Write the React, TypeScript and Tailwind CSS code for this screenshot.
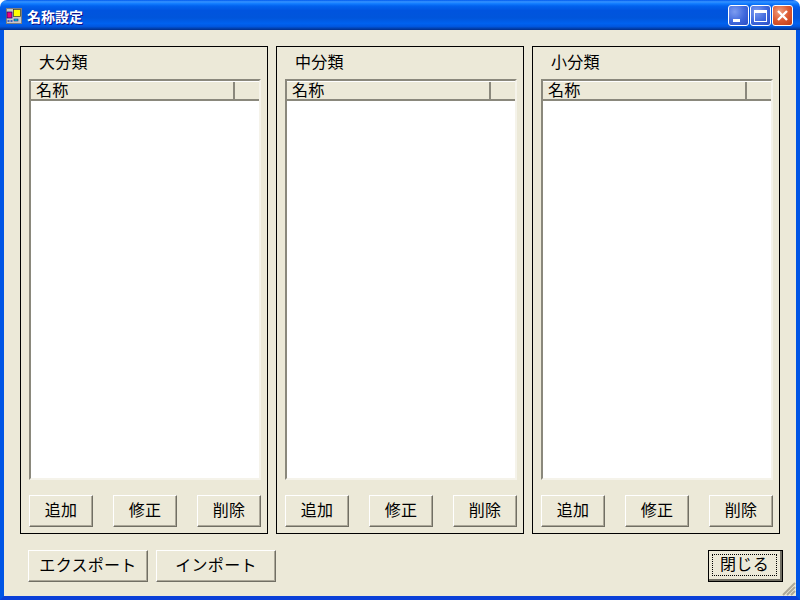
import { ReactElement, ReactNode } from 'react';

const jp = 'font-["Noto_Sans_CJK_JP","Liberation_Sans",sans-serif]';

function WinButton({ label, primary }: { label: string; primary?: boolean }): ReactElement {
  return (
    <button
      className={
        primary
          ? 'w-[75px] h-[32px] border border-black bg-[#ece9d8] p-0 text-[16px] tracking-[0.3px] text-black'
          : 'w-full h-[32px] border border-t-white border-l-white border-r-[#716f64] border-b-[#716f64] shadow-[inset_-1px_-1px_0_#aca899] bg-[#ece9d8] pb-[5px] text-[16px] tracking-[0.3px] text-black'
      }
    >
      {primary ? (
        <span className="flex h-full items-center justify-center border-r-2 border-b-2 border-r-[#716f64] border-b-[#716f64] p-[3px]">
          <span className="flex h-full w-full items-center justify-center border border-dotted border-black pb-[5px]">{label}</span>
        </span>
      ) : (
        label
      )}
    </button>
  );
}

function CaptionButton({ red, children }: { red?: boolean; children: ReactNode }): ReactElement {
  return (
    <div
      className={
        red
          ? 'flex h-[21px] w-[21px] items-center justify-center rounded-[3px] border border-white bg-[radial-gradient(circle_at_35%_30%,#f0a080,#dc5a32_50%,#c03a14)]'
          : 'flex h-[21px] w-[21px] items-center justify-center rounded-[3px] border border-white bg-[radial-gradient(circle_at_30%_30%,#7d9cf0,#3f68dc_55%,#2a4cc4)]'
      }
    >
      {children}
    </div>
  );
}

function Group({ title }: { title: string }): ReactElement {
  return (
    <section className="flex h-[488px] w-[248px] flex-col border border-black pl-[8px] pr-[6px]">
      <h2 className="ml-[10px] mt-[2px] mb-[2px] h-[24px] text-[16px] leading-[24px] tracking-[0.3px] text-black">{title}</h2>
      <div className="mt-[4px] h-[401px] w-[232px] border-2 border-t-[#8a887c] border-l-[#8a887c] border-r-[#f5f3ea] border-b-[#f5f3ea] bg-white">
        <div className="flex h-[20px] bg-[#ece9d8] border-b-2 border-b-[#8a887c] border-t border-t-white">
          <div className="w-[204px] border-r-2 border-r-[#8a887c] pl-[5px] text-[16px] leading-[15px] tracking-[0.3px] text-black">名称</div>
          <div className="flex-1" />
        </div>
      </div>
      <div className="mt-[15px] grid grid-cols-3 gap-x-[20px]">
        <WinButton label="追加" />
        <WinButton label="修正" />
        <WinButton label="削除" />
      </div>
    </section>
  );
}

export default function App(): ReactElement {
  return (
    <div className={`relative flex h-[600px] w-[800px] flex-col overflow-hidden bg-white ${jp}`}>
      <header className="flex h-[30px] items-center rounded-t-[7px] bg-[linear-gradient(180deg,#0058ee_0%,#3593ff_6%,#127dff_12%,#0262ee_20%,#0054de_35%,#0055db_60%,#0062ef_78%,#0157e0_88%,#0244b3_94%,#012e8c_100%)] pl-[6px] pr-[7px]">
        <svg width="16" height="16" viewBox="0 0 16 16" className="mt-[2px]">
          <rect x="0" y="0" width="16" height="16" fill="#c8c8c8" />
          <rect x="0.5" y="0.5" width="15" height="15" fill="none" stroke="#7f7f7f" />
          <rect x="1" y="4" width="5" height="6" fill="#f00078" stroke="#000080" strokeWidth="0.7" />
          <rect x="7.5" y="1.5" width="7" height="7" fill="#ffff00" stroke="#303030" strokeWidth="0.7" />
          <rect x="8" y="11" width="4" height="2" fill="#00d0d0" stroke="#000080" strokeWidth="0.5" />
          <rect x="1.5" y="12" width="2" height="2" fill="#4060c0" />
          <rect x="4.5" y="12" width="2" height="2" fill="#4060c0" />
        </svg>
        <span className="ml-[5px] mt-[2px] text-[14px] leading-[16px] font-bold text-white [text-shadow:1px_1px_0_#0f1089]">名称設定</span>
        <div className="ml-auto mt-[1px] flex gap-[1px]">
          <CaptionButton>
            <span className="mr-[4px] mt-[9px] h-[3px] w-[7px] bg-white" />
          </CaptionButton>
          <CaptionButton>
            <span className="h-[12px] w-[13px] border border-t-[3px] border-white" />
          </CaptionButton>
          <CaptionButton red>
            <svg width="13" height="13" viewBox="0 0 13 13">
              <path d="M2 2 L11 11 M11 2 L2 11" stroke="#fff" strokeWidth="2.4" />
            </svg>
          </CaptionButton>
        </div>
      </header>

      <main className="flex flex-1 flex-col border-x-4 border-b-4 border-x-[#0055e5] border-b-[#0a3fd8] bg-[#ece9d8] pl-[16px] pr-[13px] pt-[16px]">
        <div className="flex gap-[8px]">
          <Group title="大分類" />
          <Group title="中分類" />
          <Group title="小分類" />
        </div>
        <div className="mt-[16px] flex items-start pl-[8px]">
          <div className="w-[120px]">
            <WinButton label="エクスポート" />
          </div>
          <div className="ml-[8px] w-[120px]">
            <WinButton label="インポート" />
          </div>
          <div className="ml-auto">
            <WinButton label="閉じる" primary />
          </div>
        </div>
      </main>

      <svg width="14" height="14" viewBox="0 0 14 14" className="absolute bottom-[4px] right-[4px]">
        <path d="M13 1 L1 13 M13 5 L5 13 M13 9 L9 13" stroke="#aca899" strokeWidth="2" />
      </svg>
    </div>
  );
}
